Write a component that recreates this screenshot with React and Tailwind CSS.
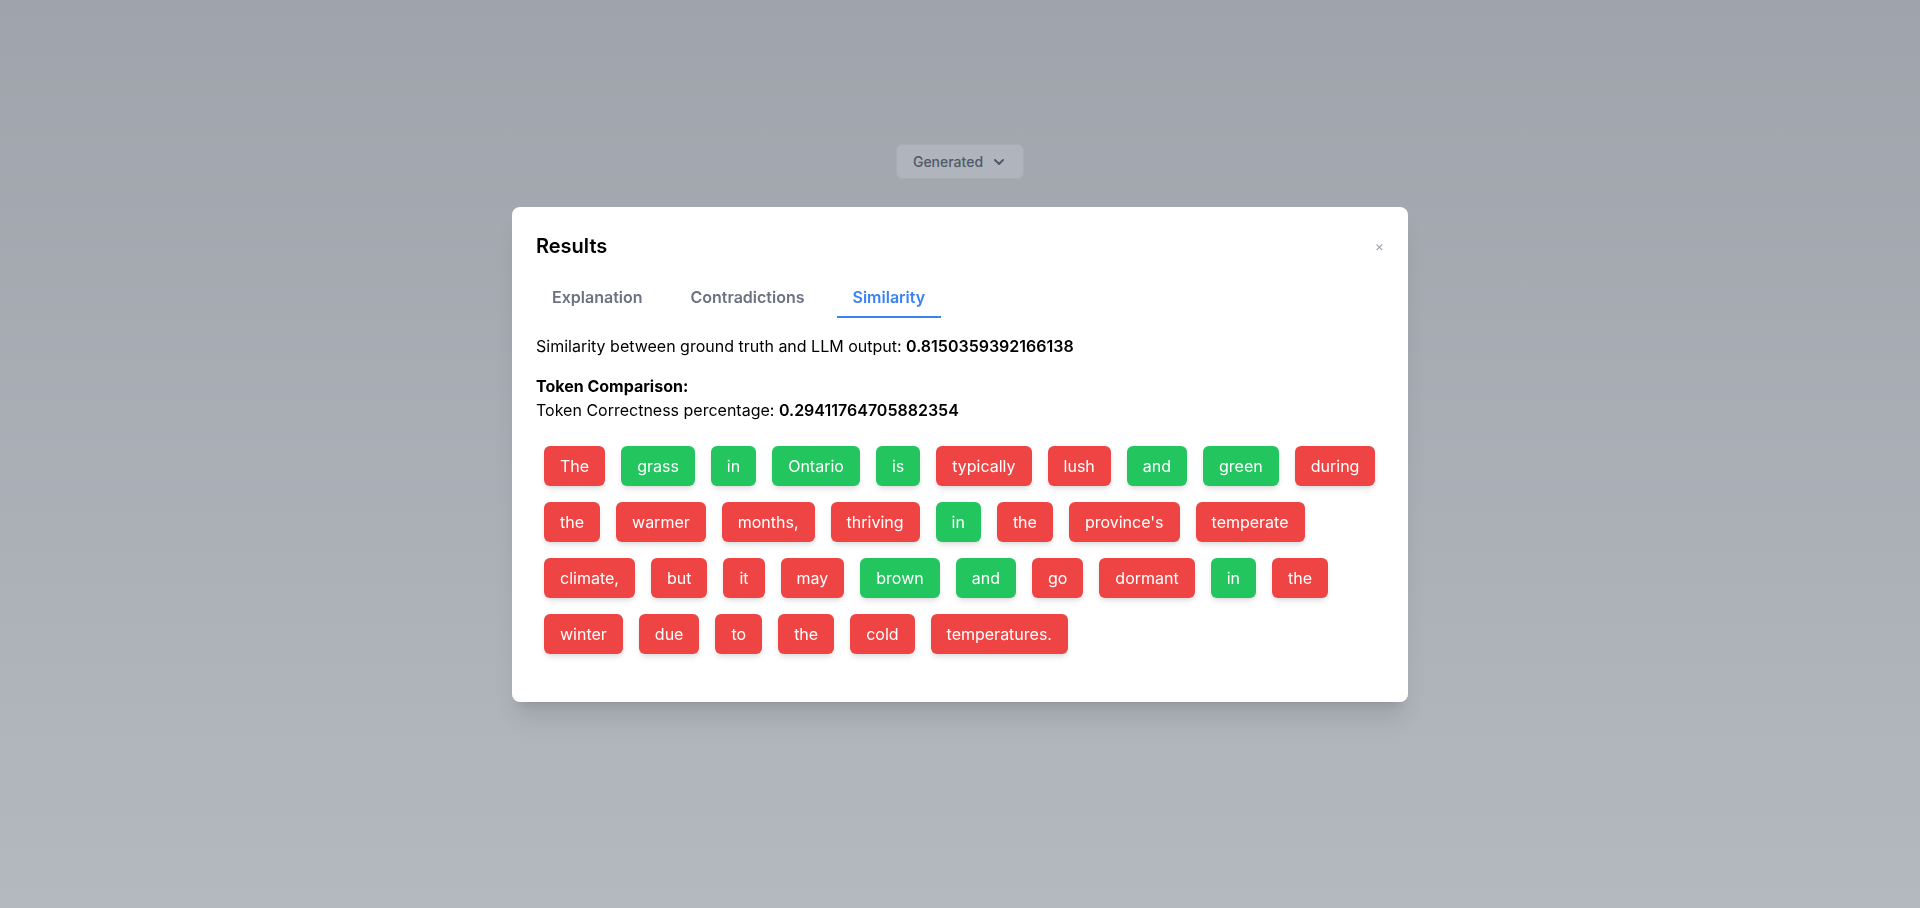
import React, { useState } from "react";
import { ChevronDown } from "lucide-react";

const TOKENS = [
  ["The", false],
  ["grass", true],
  ["in", true],
  ["Ontario", true],
  ["is", true],
  ["typically", false],
  ["lush", false],
  ["and", true],
  ["green", true],
  ["during", false],
  ["the", false],
  ["warmer", false],
  ["months,", false],
  ["thriving", false],
  ["in", true],
  ["the", false],
  ["province's", false],
  ["temperate", false],
  ["climate,", false],
  ["but", false],
  ["it", false],
  ["may", false],
  ["brown", true],
  ["and", true],
  ["go", false],
  ["dormant", false],
  ["in", true],
  ["the", false],
  ["winter", false],
  ["due", false],
  ["to", false],
  ["the", false],
  ["cold", false],
  ["temperatures.", false],
];

const TABS = ["Explanation", "Contradictions", "Similarity"];

export default function App() {
  const [tab, setTab] = useState("Similarity");

  return (
    <div
      className="min-h-screen bg-linear-to-b from-[#9fa4ac] to-[#b4b8bf]"
      style={{ fontFamily: "Inter, 'Noto Sans', sans-serif" }}
    >
      <div className="flex justify-center pt-[144px]">
        <button className="flex items-center gap-2 h-[35px] px-4 rounded-md border border-[#a8adb5] bg-[#b0b4bc] text-sm font-medium text-[#4f5968]">
          Generated
          <ChevronDown className="w-4 h-4" strokeWidth={3} />
        </button>
      </div>

      <div className="fixed inset-0 flex items-center justify-center">
        <div className="w-[896px] bg-white rounded-lg shadow-xl px-6 pt-[25px] pb-6 text-black">
          <div className="flex items-center justify-between mb-4">
            <h2 className="text-xl font-semibold">Results</h2>
            <button className="text-sm text-[#9ca3af] leading-none">×</button>
          </div>

          <div className="flex gap-4 mb-4">
            {TABS.map((t) => (
              <button
                key={t}
                onClick={() => setTab(t)}
                className={
                  t === tab
                    ? "px-4 pt-[9px] pb-[7px] font-semibold text-[#3b82f6] border-b-2 border-[#3b82f6]"
                    : "px-4 pt-[9px] pb-[7px] font-semibold text-[#6b7280] border-b-2 border-transparent"
                }
              >
                {t}
              </button>
            ))}
          </div>

          <p className="mb-4">
            Similarity between ground truth and LLM output:{" "}
            <span className="font-semibold">0.8150359392166138</span>
          </p>
          <p className="font-bold">Token Comparison:</p>
          <p>
            Token Correctness percentage:{" "}
            <span className="font-semibold">0.29411764705882354</span>
          </p>

          <div className="flex flex-wrap mt-4 mb-4">
            {TOKENS.map(([word, ok], i) => (
              <span
                key={i}
                className={
                  ok
                    ? "m-2 px-4 py-2 rounded-md shadow-md text-white bg-[#22c55e]"
                    : "m-2 px-4 py-2 rounded-md shadow-md text-white bg-[#ef4444]"
                }
              >
                {word}
              </span>
            ))}
          </div>
        </div>
      </div>
    </div>
  );
}
